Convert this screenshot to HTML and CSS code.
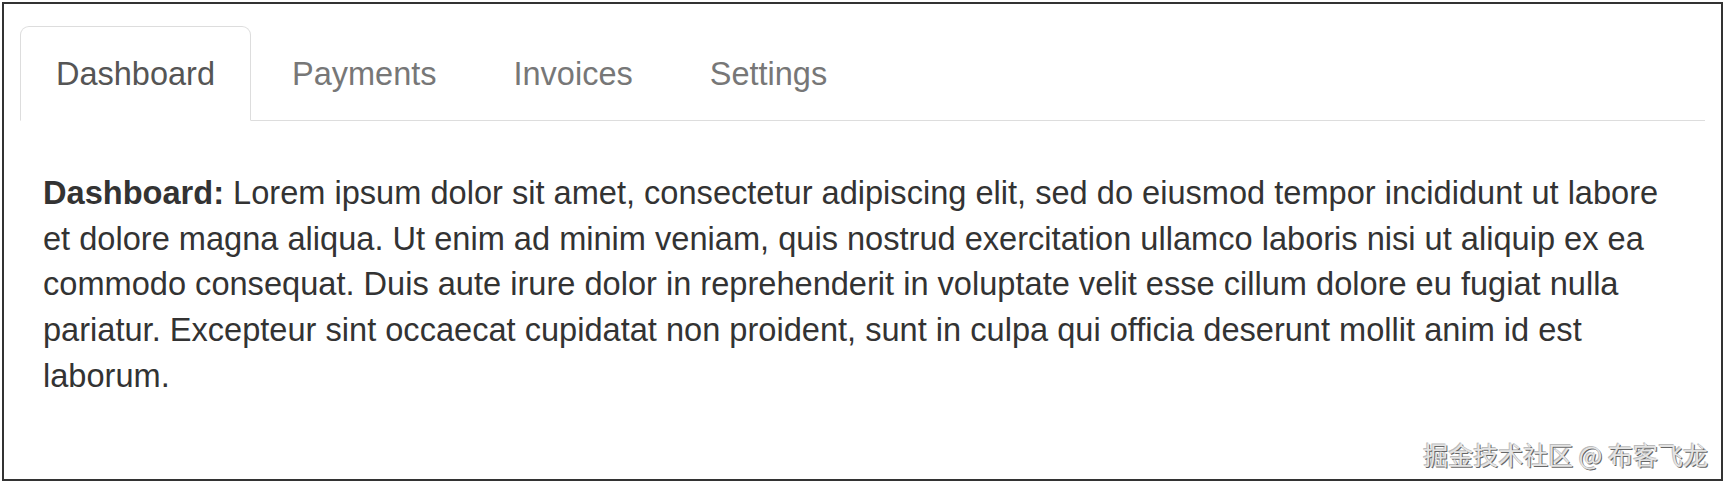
FILE: index.html
```html
<!DOCTYPE html>
<html lang="en">
<head>
<meta charset="utf-8">
<title>Tabs</title>
<link rel="stylesheet" href="styles.css">
</head>
<body>
<div class="frame">
  <ul class="tabs">
    <li class="tab active">Dashboard</li>
    <li class="tab">Payments</li>
    <li class="tab">Invoices</li>
    <li class="tab">Settings</li>
  </ul>
  <div class="pane">
    <p><strong>Dashboard:</strong> Lorem ipsum dolor sit amet, consectetur adipiscing elit, sed do eiusmod tempor incididunt ut labore et dolore magna aliqua. Ut enim ad minim veniam, quis nostrud exercitation ullamco laboris nisi ut aliquip ex ea commodo consequat. Duis aute irure dolor in reprehenderit in voluptate velit esse cillum dolore eu fugiat nulla pariatur. Excepteur sint occaecat cupidatat non proident, sunt in culpa qui officia deserunt mollit anim id est laborum.</p>
  </div>
  <div class="mark">掘金技术社区 @ 布客飞龙</div>
</div>
</body>
</html>
```
FILE: styles.css
```css
html, body {
  margin: 0;
  padding: 0;
  background: #fff;
}

.frame {
  position: relative;
  box-sizing: border-box;
  margin: 2px;
  width: 1721px;
  height: 479px;
  border: 2px solid #333;
  padding: 22px 16px 0;
  font-family: "Liberation Sans", Arial, sans-serif;
}

.tabs {
  display: flex;
  margin: 0;
  padding: 0;
  list-style: none;
  border-bottom: 1px solid #ddd;
}

.tab {
  margin: 0 5px -1px 0;
  padding: 24px 35px 23px;
  font-size: 32.5px;
  line-height: 46px;
  color: #777;
  border: 1px solid transparent;
  border-radius: 9px 9px 0 0;
}

.tab.active {
  color: #555;
  background: #fff;
  border-color: #ddd #ddd transparent;
}

.pane {
  padding: 49px 23px 0;
}

.pane p {
  margin: 0;
  font-size: 32.6px;
  line-height: 45.7px;
  color: #333;
}

.pane strong {
  font-weight: bold;
}

.mark {
  position: absolute;
  right: 13px;
  bottom: 10px;
  font-family: "Noto Sans CJK SC", sans-serif;
  font-size: 25px;
  line-height: 30px;
  color: #e4e4e4;
  text-shadow: 1px 1px 0 #666, -1px -1px 0 #bbb;
}
```
